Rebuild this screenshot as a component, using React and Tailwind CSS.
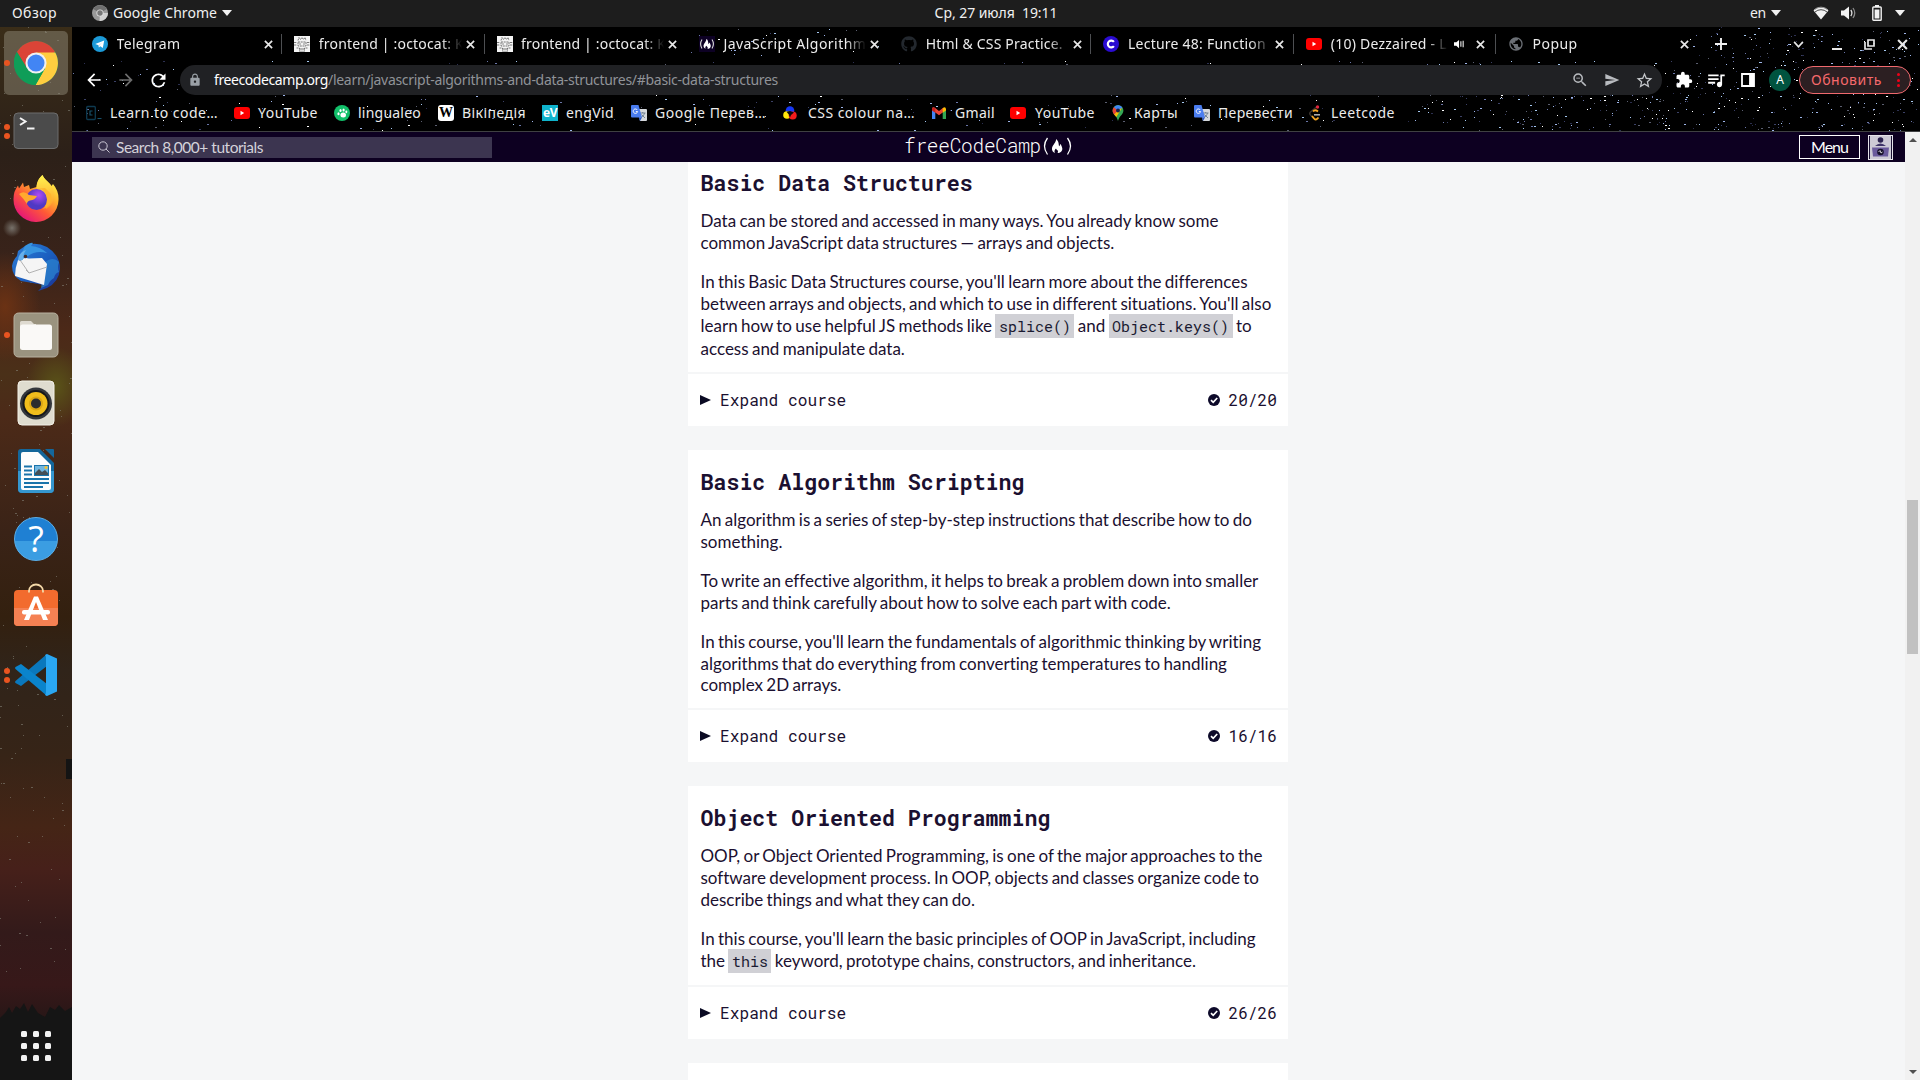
import React, { useLayoutEffect, useRef, useState } from "react";
import {
  MdArrowBack,
  MdArrowForward,
  MdRefresh,
  MdLock,
  MdZoomOut,
  MdSend,
  MdStarBorder,
  MdExtension,
  MdQueueMusic,
  MdPublic,
} from "react-icons/md";
import { FaGithub } from "react-icons/fa";

/* Text whose letter spacing is adjusted so that it takes exactly w pixels. */
function Fit({ w, className = "", children }) {
  const ref = useRef(null);
  const [ls, setLs] = useState(null);
  useLayoutEffect(() => {
    const el = ref.current;
    el.style.letterSpacing = "0px";
    const natural = el.getBoundingClientRect().width;
    setLs((w - natural) / String(children).length);
  }, [w, children]);
  return (
    <span
      ref={ref}
      className={`inline-block whitespace-pre ${className}`}
      style={ls === null ? undefined : { letterSpacing: ls + "px" }}
    >
      {children}
    </span>
  );
}

function makeStars(count, width, height, seed) {
  let s = seed;
  const rnd = () => {
    s = (s * 1664525 + 1013904223) % 4294967296;
    return s / 4294967296;
  };
  const colors = ["#ffffff", "#9db4e8", "#6a76a8", "#3b4166", "#5b5f70", "#2c3050", "#a5c8f0"];
  return Array.from({ length: count }, () => ({
    x: Math.floor(rnd() * width),
    y: Math.floor(rnd() * height),
    w: rnd() > 0.7 ? 2 : 1,
    c: colors[Math.floor(rnd() * colors.length)],
  }));
}
const SKY = [
  ...makeStars(520, 1848, 70, 7).map((s) => ({ ...s, y: s.y + 34 })),
  ...makeStars(640, 500, 104, 31).map((s) => ({ ...s, x: s.x + 1348 })),
  ...makeStars(30, 190, 34, 53).map((s) => ({ ...s, x: s.x + 618 })),
].filter((s) => s.y > 33 || s.x > 1610 || (s.x > 617 && s.x < 815));
const DOCK_STARS = makeStars(170, 72, 960, 99);

/* ---------- small icons ---------- */
const Telegram = () => (
  <svg viewBox="0 0 16 16" className="size-4">
    <circle cx="8" cy="8" r="8" fill="#1c9ad8" />
    <path d="M3.2 7.9 12.2 4.4 10.8 12 8.3 10.2 6.9 11.5 6.6 9.2Z" fill="#fff" />
    <path d="M6.6 9.2 10.6 6 7.4 9.6 6.9 11.5Z" fill="#b7d9ee" />
  </svg>
);
const Octocat = () => (
  <svg viewBox="0 0 16 16" className="size-4">
    <rect width="16" height="16" fill="#f4f4f4" />
    <path
      d="M4 4.500 5 1.500 6.500 3.500 8 1.500 9.500 3.500 11 1.500 12 4.500M0 6.500H3M0 9H3M13 6.500H16M13 9H16M4 6H12V10H4ZM2.500 12H5.500V15.500M13.500 12H10.500V15.500M7 12V16M9 12V16"
      stroke="#555"
      strokeWidth=".8"
      strokeDasharray="2 .7"
      fill="none"
    />
    <path d="M6 7.5V8.5M10 7.5V8.5" stroke="#222" />
  </svg>
);
const FLAME =
  "M4.500 0C5 3 1 6 .5 9 .2 11.500 1.500 13.500 3.500 14 2.500 12.500 3 10.800 4.500 9.500 5 11 6.500 11 6.500 12.500 6.500 13.400 6 14 6 14 9 14 11 12 10.800 9.500 10.600 7.500 9.500 6.500 9.300 5 8.300 5.600 8.300 6.800 7.800 7.300 7 7 7.800 2 4.500 0Z";
const FccFav = () => (
  <svg viewBox="0 0 16 16" className="size-4">
    <rect width="16" height="16" fill="#0d0124" />
    <path d="M3 3.500Q.2 8 3 12.500M13 3.500Q15.800 8 13 12.500" stroke="#ddd" fill="none" strokeWidth="1.100" />
    <path d={FLAME} fill="#fff" transform="translate(4.200 3) scale(.7)" />
  </svg>
);
const Scrimba = () => (
  <svg viewBox="0 0 16 16" className="size-4">
    <circle cx="8" cy="8" r="8" fill="#2a0bd1" />
    <path d="M10.900 5.900A3.400 3.400 0 1 0 10.900 10.100" stroke="#fff" strokeWidth="2.200" fill="none" />
  </svg>
);
const YouTube = () => (
  <svg viewBox="0 0 16 16" className="size-4">
    <rect y="2" width="16" height="12" rx="3" fill="#f00" />
    <path d="M6.500 5.800V10.200L10.200 8Z" fill="#fff" />
  </svg>
);
const LearnCode = () => (
  <svg viewBox="0 0 16 16" className="size-4">
    <rect x=".7" y="1.500" width="8.600" height="13" rx="1" fill="none" stroke="#0e3a50" strokeWidth="1.300" />
    <path d="M6.500 6H4V10H6.500M11.500 13.500H15.500" stroke="#17506b" strokeWidth="1.200" fill="none" />
  </svg>
);
const Lingua = () => (
  <svg viewBox="0 0 16 16" className="size-4">
    <circle cx="8" cy="8" r="8" fill="#12c06a" />
    <g fill="#fff">
      <ellipse cx="9.200" cy="10" rx="2.800" ry="2.500" />
      <ellipse cx="4.500" cy="8.800" rx="1.100" ry="1.500" />
      <ellipse cx="6.500" cy="5.500" rx="1.100" ry="1.500" />
      <ellipse cx="9.600" cy="5" rx="1.100" ry="1.500" />
      <ellipse cx="12.300" cy="6.800" rx="1" ry="1.400" />
    </g>
  </svg>
);
const Wiki = () => (
  <span className="flex size-4 items-center justify-center rounded-[3px] bg-white font-['Liberation_Serif',serif] text-[14px] leading-4 font-bold text-black">
    W
  </span>
);
const EngVid = () => (
  <span className="flex size-4 items-center justify-center bg-[#0fb3cc] font-['Noto_Sans',sans-serif] text-[12px] leading-4 font-bold tracking-[-0.5px] text-white">
    eV
  </span>
);
const Translate = () => (
  <svg viewBox="0 0 16 16" className="size-4">
    <path d="M6 4H15a1 1 0 0 1 1 1V15a1 1 0 0 1-1 1H9Z" fill="#d5d8dc" />
    <path d="M9 8H14.500M11.700 7V8M13.500 8C13 10.500 11 12 10 12.500M10.500 9.500 14 13" stroke="#6a7c8c" strokeWidth=".9" fill="none" />
    <path d="M1 0H7.500L11 12.500H1a1 1 0 0 1-1-1V1A1 1 0 0 1 1 0Z" fill="#4a7df0" />
    <path d="M6.300 5A2.200 2.200 0 1 0 6.600 6.600H4.800" stroke="#fff" fill="none" />
    <path d="M7.700 12.500H11L9 16Z" fill="#2a55c4" />
  </svg>
);
const CssColour = () => (
  <svg viewBox="0 0 16 16" className="size-4">
    <circle cx="8" cy="5.500" r="4.300" fill="#1537f5" />
    <circle cx="5" cy="10" r="3.800" fill="#ffe60a" />
    <circle cx="10.700" cy="10.500" r="4" fill="#f21b1b" />
    <path d="M4.500 6.800 8 6 12 7.500 9 10 8 12.500 6.800 9.500Z" fill="#0a0a0a" />
  </svg>
);
const Gmail = () => (
  <svg viewBox="0 0 16 16" className="size-4">
    <path d="M1 4V14H4.300V6.800Z" fill="#4285f4" />
    <path d="M15 4V14H11.700V6.800Z" fill="#34a853" />
    <path d="M1 3.500Q1.500 1.500 3.500 2.500L8 6 12.500 2.500 11.700 7.500 8 10.300 1 5Z" fill="#ea4335" />
    <path d="M11.700 3.200Q14.500 1 15 4V5.500L11.700 7.800Z" fill="#fbbc04" />
    <path d="M1 3.500Q2 1.500 4.300 3.200V7.800L1 5.500Z" fill="#c5221f" />
  </svg>
);
const Maps = () => (
  <svg viewBox="0 0 16 16" className="size-4">
    <path d="M2.600 5.500A5.400 5.400 0 0 1 13.400 5.500C13.400 9.500 9.500 10.500 8 16 6.800 10.500 2.600 9.500 2.600 5.500Z" fill="#34a853" />
    <path d="M2.600 5.500A5.400 5.400 0 0 1 4 1.900L8 5.500 4.500 10C3.500 8.800 2.600 7.500 2.600 5.500Z" fill="#ea4335" />
    <path d="M4 1.900A5.400 5.400 0 0 1 12.500 2.600L8 6Z" fill="#4285f4" />
    <path d="M4.200 9.500 8.500 5 12 3 6.300 12Z" fill="#fbbc04" />
    <circle cx="8" cy="5.400" r="2" fill="#14204a" />
  </svg>
);
const Leet = () => (
  <svg viewBox="0 0 16 16" className="size-4">
    <path d="M9 1.500 2.500 7Q1 8.500 2.500 10L6 13.800" stroke="#3a342e" strokeWidth="1.500" fill="none" />
    <path d="M5 6.500Q7 4 10 6.500M4 11 6.500 14Q8 15.500 10.500 12.500" stroke="#f5a623" strokeWidth="1.800" fill="none" />
    <path d="M6 9.800H12" stroke="#b5b5b5" strokeWidth="1.500" />
    <circle cx="9.500" cy="2" r="1.700" fill="#e0263c" />
  </svg>
);
const Cross = ({ className = "size-[9px]" }) => (
  <svg viewBox="0 0 10 10" className={className}>
    <path d="M1 1 9 9M9 1 1 9" stroke="#e8e8e8" strokeWidth="1.900" fill="none" />
  </svg>
);
const Caret = () => <span className="h-0 w-0 border-x-[5px] border-t-[6px] border-x-transparent border-t-[#f2f2f2]" />;

/* ---------- GNOME top bar ---------- */
function TopBar() {
  return (
    <div className="grid h-[27px] grid-cols-[1fr_auto_1fr] items-center bg-[#1d1d1d] pb-px font-['Noto_Sans',sans-serif] text-[14px] leading-[26px] text-[#f0f0f0]">
      <div className="flex items-center">
        <Fit w={45} className="ml-3">Обзор</Fit>
        <svg viewBox="0 0 16 16" className="ml-[35px] size-4">
          <circle cx="8" cy="8" r="8" fill="#9a9a9a" />
          <path d="M8 8 1.200 4A8 8 0 0 1 14.800 4Z" fill="#6f6f6f" />
          <path d="M8 8H16A8 8 0 0 1 7.500 16Z" fill="#d0d0d0" />
          <circle cx="8" cy="8" r="3.600" fill="#ddd" />
          <circle cx="8" cy="8" r="2.700" fill="#777" />
        </svg>
        <Fit w={104} className="ml-[5px]">Google Chrome</Fit>
        <span className="ml-[5px] flex"><Caret /></span>
      </div>
      <div className="flex w-[195px] pl-[72px]">
        <Fit w={123}>Ср, 27 июля  19:11</Fit>
      </div>
      <div className="flex items-center justify-end pr-[15px]">
        <Fit w={16}>en</Fit>
        <span className="ml-[5px] flex"><Caret /></span>
        <svg viewBox="0 0 16 14" className="ml-8 h-[14px] w-4">
          <path d="M.5 4.500A11 11 0 0 1 15.500 4.500L8 13.500Z" fill="#f2f2f2" />
          <path d="M1 3.800A10.500 10.500 0 0 1 15 3.800" stroke="#9a9a9a" fill="none" />
          <path d="M2 6A9 9 0 0 1 14 6" stroke="#1d1d1d" strokeWidth=".8" fill="none" />
        </svg>
        <svg viewBox="0 0 16 14" className="ml-[12px] h-[14px] w-4">
          <path d="M0 4.500H3L8 .5V13.500L3 9.500H0Z" fill="#f2f2f2" />
          <path d="M9.800 4Q12 7 9.800 10" stroke="#e0e0e0" strokeWidth="1.300" fill="none" />
          <path d="M12 2Q15.500 7 12 12" stroke="#8a8a8a" strokeWidth="1.300" fill="none" />
        </svg>
        <svg viewBox="0 0 10 16" className="ml-[15px] h-4 w-[10px]">
          <path d="M3 0H7V2H3Z" fill="#f2f2f2" />
          <rect x=".8" y="2" width="8.400" height="13.200" rx=".8" fill="none" stroke="#f2f2f2" strokeWidth="1.400" />
          <rect x="2.600" y="4.500" width="4.800" height="9" fill="#f2f2f2" />
        </svg>
        <span className="ml-[13px] flex"><Caret /></span>
      </div>
    </div>
  );
}

/* ---------- dock ---------- */
const Dots = ({ n }) => (
  <span className="absolute left-1 flex flex-col gap-[3px]">
    {Array.from({ length: n }, (_, i) => (
      <span key={i} className="size-[6px] rounded-full bg-[#e95420]" />
    ))}
  </span>
);

function DockItem({ dots = 0, active, children }) {
  return (
    <div className="relative flex h-[68px] w-[72px] items-center justify-center">
      {active && <span className="absolute inset-x-[4px] inset-y-[2px] rounded-[5px] bg-[#8d8775]/50" />}
      {dots > 0 && <Dots n={dots} />}
      <span className="relative flex">{children}</span>
    </div>
  );
}

const ChromeIcon = () => (
  <svg viewBox="0 0 48 48" className="size-[46px]">
    <circle cx="24" cy="24" r="23" fill="#13a05a" />
    <path d="M24 24 4.100 12.500A23 23 0 0 1 43.900 12.500Z" fill="#db4437" />
    <path d="M24 13H44.100A23 23 0 0 1 23.500 47L33.500 29.500Z" fill="#ffcd40" />
    <path d="M4.100 12.500 14.500 29.500 24 24 24 13Z" fill="#db4437" />
    <path d="M4.100 12.500 14.500 29.500Q19 35 24 35L33.500 29.500 23.500 47A23 23 0 0 1 4.100 12.500Z" fill="#0f9d58" />
    <circle cx="24" cy="24" r="11" fill="#f1f1f1" />
    <circle cx="24" cy="24" r="8.900" fill="#4285f4" />
  </svg>
);
const TerminalIcon = () => (
  <svg viewBox="0 0 46 38" className="h-[38px] w-[46px]">
    <rect x="1" y="1" width="44" height="35.500" rx="4" fill="#4b4b4b" stroke="#6d6d6d" />
    <path d="M7 6 12.500 9.500 7 13M14 16.500H21.500" stroke="#f4f4f4" strokeWidth="2" fill="none" />
  </svg>
);
const FirefoxIcon = () => (
  <svg viewBox="0 0 48 48" className="mb-[3px] size-12">
    <defs>
      <linearGradient id="ff1" x1=".85" y1=".1" x2=".2" y2=".95">
        <stop offset="0" stopColor="#fff04a" />
        <stop offset=".3" stopColor="#ffb02e" />
        <stop offset=".6" stopColor="#ff5a36" />
        <stop offset="1" stopColor="#e4127c" />
      </linearGradient>
      <radialGradient id="ff2" cx=".6" cy=".3">
        <stop offset="0" stopColor="#b04cf5" />
        <stop offset="1" stopColor="#4f39c4" />
      </radialGradient>
      <linearGradient id="ff3" x1="0" y1="0" x2="0" y2="1">
        <stop offset="0" stopColor="#fff44f" />
        <stop offset="1" stopColor="#ff9a2a" />
      </linearGradient>
    </defs>
    <path d="M24.500 13C25 8 27 4 30.500 1 32 5.500 37.500 8 39.500 12L41 10Q47 17 46.500 26A22.500 22.500 0 0 1 1.500 25Q1.500 17 6 11.500L7 14.500 11 8.500 12 13 17 11 18 15Z" fill="url(#ff1)" />
    <path d="M24.500 14C24.500 8 27 4 30.500 1 32 6 39 9 41 16 43.500 24 41 31 34 35L30 20Z" fill="url(#ff3)" />
    <circle cx="24.500" cy="25.500" r="10.500" fill="url(#ff2)" />
    <path d="M22 15Q30 13 34 20 38 29 31 35 42 30 39 20L33 14Z" fill="#ffb52e" opacity=".9" />
    <path d="M7 20Q12 16 17 21L25 22Q23 26 18 26.500 15 27 15 30 11 24 7 20Z" fill="#ffa92e" />
  </svg>
);
const ThunderbirdIcon = () => (
  <svg viewBox="0 0 50 50" className="size-[50px]">
    <defs>
      <linearGradient id="tb" x1="0" y1="0" x2="1" y2="1">
        <stop offset="0" stopColor="#2f7fd6" />
        <stop offset=".5" stopColor="#1b5fc0" />
        <stop offset="1" stopColor="#1a2f8f" />
      </linearGradient>
    </defs>
    <path d="M14 4Q24-1 36 5 49 13 49 27 48 40 36 46L27 49 33 43 10 39Q1 34 1 24 2 18 6 14L7 9Z" fill="url(#tb)" />
    <path d="M14 4Q20 0 22 1L20 4Q30 5 36 11 25 8 17 14L10 22Q9 12 14 4Z" fill="#3794e0" />
    <path d="M34 20Q42 14 48 20 46 25 48 30 44 31 43 36 39 38 37 43L30 46Z" fill="#2b83cf" opacity=".75" />
    <path d="M7 18 10 19Q12 15 18 16.500L31 16 36 22 33 43 4 34Q4 26 7 18Z" fill="#f5f5f5" />
    <path d="M9 18 18 31 36 25M18 31 15 28" stroke="#a9a9a9" strokeWidth=".9" fill="none" />
    <circle cx="14.500" cy="14.500" r="1.800" fill="#432a27" />
    <path d="M7 18Q8 10 15 8 12 12 12 18Z" fill="#68b0ea" />
  </svg>
);
const FilesIcon = () => (
  <svg viewBox="0 0 46 46" className="size-[46px]">
    <rect x="1" y="1" width="44" height="44" rx="4.500" fill="#9a937f" stroke="#b8b1a0" />
    <path d="M7 12V10.500Q7 9 8.500 9H18L21 12H23V18H7Z" fill="#dedad0" />
    <rect x="7" y="12.500" width="32" height="25.500" rx="2.500" fill="#faf9f7" />
  </svg>
);
const RhythmboxIcon = () => (
  <svg viewBox="0 0 38 46" className="h-[46px] w-[38px]">
    <rect x="1" y="1" width="36" height="44" rx="4" fill="#dfdccf" stroke="#f3f1e8" />
    <circle cx="19" cy="23.500" r="16" fill="#34373c" />
    <circle cx="19" cy="23.500" r="13.500" fill="#16181a" />
    <circle cx="19" cy="23.500" r="11.500" fill="#f0bd1c" />
    <circle cx="19" cy="23.500" r="7" fill="#d9a514" />
    <circle cx="19" cy="23.500" r="5" fill="#2a2b2e" />
  </svg>
);
const WriterIcon = () => (
  <svg viewBox="0 0 38 46" className="h-[46px] w-[38px]">
    <path d="M4 1H23L37 15V41a4 4 0 0 1-4 4H5a4 4 0 0 1-4-4V4A3 3 0 0 1 4 1Z" fill="#14679b" />
    <path d="M1 23H37V41a4 4 0 0 1-4 4H5a4 4 0 0 1-4-4Z" fill="#3597cf" />
    <path d="M28 1H36Q37 1 37 2V10Z" fill="#14679b" />
    <path d="M6 4H21L34 17V40Q34 42 32 42H6Q4 42 4 40V6Q4 4 6 4Z" fill="#fdfdfd" />
    <path d="M7 18.500H15M7 22.500H15M7 26.500H15M7 31H32M7 35H32M7 39H26" stroke="#1a74ab" strokeWidth="2" />
    <rect x="17.500" y="17.500" width="14" height="10" fill="#72b7e0" stroke="#1a74ab" />
    <path d="M18 27V25L22 21 25 24 28 22 31 25V27Z" fill="#454f56" />
    <circle cx="29" cy="19.500" r="1.500" fill="#f5c12e" />
  </svg>
);
const HelpIcon = () => (
  <span className="flex size-[44px] items-center justify-center rounded-full border border-[#5aaee8] bg-linear-to-b from-[#1f80d3] from-55% to-[#3b9de2] to-55% font-['Open_Sans',sans-serif] text-[36px] leading-none text-white">
    ?
  </span>
);
const StoreIcon = () => (
  <svg viewBox="0 0 46 46" className="mb-[4px] size-[46px]">
    <rect x="1" y="8" width="44" height="36" rx="4" fill="#f26b2e" />
    <path d="M1 26H45V40a4 4 0 0 1-4 4H5a4 4 0 0 1-4-4Z" fill="#f58153" />
    <path d="M16 10.500V9A7 6.500 0 0 1 30 9V10.500" stroke="#f4d9a8" strokeWidth="1.800" fill="none" />
    <path d="M11 38 21 14.500H25L35 38H30L23 20 16 38Z" fill="#fff" />
    <rect x="9" y="28" width="28" height="4.500" rx="2" fill="#fff" />
  </svg>
);
const VsCodeIcon = () => (
  <svg viewBox="0 0 44 44" className="size-[44px]">
    <path d="M33 1V13L7 33 1.500 30Q.5 29 1.500 28Z" fill="#0a78bd" />
    <path d="M1.500 14 7 11 33 31V43L1.500 16Q.5 15 1.500 14Z" fill="#0a84cc" />
    <path d="M33 1 43 5.500V38.500L33 43 31 42Q32 41 32 39V5Q32 3 31 2Z" fill="#2aa7f2" />
  </svg>
);

function Dock() {
  return (
    <div className="relative flex h-[1053px] w-[72px] shrink-0 flex-col overflow-hidden bg-[#2c2018]">
      <div className="absolute inset-0 bg-[linear-gradient(to_bottom,#3a2d18_0%,#2c2018_12%,#39231a_22%,#4c2918_29%,#4a3018_33%,#4c2a18_37%,#3a2317_48%,#33200f_56%,#30241a_61%,#362417_69%,#452516_76%,#46201a_80%,#331a1a_86%,#371819_91%,#241616_95%,#151515_97.5%)]" />
      <div className="absolute top-[320px] left-[26px] h-[80px] w-[60px] bg-[radial-gradient(closest-side,#5a5318,transparent)]" />
      <div className="absolute top-[225px] left-[-30px] h-[110px] w-[70px] bg-[radial-gradient(closest-side,#6b3214,transparent)]" />
      <div className="absolute top-[192px] left-[3px] size-[18px] bg-[radial-gradient(closest-side,#77716a,transparent)]" />
      <svg viewBox="0 0 72 1053" className="absolute inset-0 h-[1053px] w-[72px]">
        {DOCK_STARS.map((s, i) => (
          <rect key={i} x={s.x} y={s.y} width={s.w} height={1} fill="#8a8a80" opacity=".55" />
        ))}
        <path d="M0 991 6 985 9 980 12 986 16 979 20 982 24 976 28 985 32 977 38 986 45 990 50 980 55 983 59 978 65 984 72 980V1053H0Z" fill="#151515" />
      </svg>
      <div className="absolute top-[732px] left-[66px] h-[20px] w-[6px] bg-[#141414]" />
      <div className="relative flex flex-col pt-[2px]">
        <DockItem dots={1} active><ChromeIcon /></DockItem>
        <DockItem dots={2}><TerminalIcon /></DockItem>
        <DockItem><FirefoxIcon /></DockItem>
        <DockItem><ThunderbirdIcon /></DockItem>
        <DockItem dots={1}><FilesIcon /></DockItem>
        <DockItem><RhythmboxIcon /></DockItem>
        <DockItem><WriterIcon /></DockItem>
        <DockItem><HelpIcon /></DockItem>
        <DockItem><StoreIcon /></DockItem>
        <DockItem dots={2}><VsCodeIcon /></DockItem>
      </div>
      <div className="relative mt-auto mb-[19px] grid grid-cols-[repeat(3,6px)] justify-center gap-[6px]">
        {Array.from({ length: 9 }, (_, i) => (
          <span key={i} className="size-[6px] rounded-[1.500px] bg-[#f2f2f2]" />
        ))}
      </div>
    </div>
  );
}

/* ---------- browser chrome ---------- */
const TABS = [
  { icon: <Telegram />, label: "Telegram", w: 64, sep: true },
  { icon: <Octocat />, label: "frontend | :octocat: K", w: 145, sep: true },
  { icon: <Octocat />, label: "frontend | :octocat: K", w: 145 },
  { icon: <FccFav />, label: "JavaScript Algorithm", w: 143 },
  { icon: <FaGithub className="size-4 text-[#23282e]" />, label: "Html & CSS Practice.", w: 137, sep: true },
  { icon: <Scrimba />, label: "Lecture 48: Function", w: 138, sep: true },
  { icon: <YouTube />, label: "(10) Dezzaired - L", w: 116, sep: true, sound: true },
  { icon: <MdPublic className="size-4 text-[#6b6f75]" />, label: "Popup", w: 45 },
];

function TabStrip() {
  return (
    <div className="flex h-[38px] items-center pb-1 pl-[8px]">
      {TABS.map((t, i) => (
        <div key={i} className="flex h-[34px] w-[202.300px] shrink-0 items-center pl-[12px]">
          <span className="flex shrink-0">{t.icon}</span>
          <div
            className={
              t.sound
                ? "ml-[9px] w-[117px] overflow-hidden [mask-image:linear-gradient(to_right,#000_82%,transparent)]"
                : "ml-[8.500px] w-[146px] overflow-hidden [mask-image:linear-gradient(to_right,#000_84%,transparent_98%)]"
            }
          >
            <Fit w={t.w}>{t.label}</Fit>
          </div>
          {t.sound && (
            <svg viewBox="0 0 12 10" className="ml-[6px] h-[10px] w-[11px]">
              <path d="M0 3H2.500L5.500 .5V9.500L2.500 7H0Z" fill="#fff" />
              <path d="M7.500 2V8M10 1.500V8.500" stroke="#ddd" strokeWidth="1.300" />
            </svg>
          )}
          <span className={t.sound ? "ml-[11px] flex" : "ml-[1px] flex"}><Cross /></span>
          {t.sep && <span className="ml-auto h-[20px] w-px bg-[#4d4f52]" />}
        </div>
      ))}
      <svg viewBox="0 0 12 12" className="ml-[17px] size-3 shrink-0">
        <path d="M6 0V12M0 6H12" stroke="#f1f1f1" strokeWidth="1.900" />
      </svg>
      <svg viewBox="0 0 12 8" className="ml-[66px] h-[7px] w-[11px] shrink-0">
        <path d="M1 1 6 6.500 11 1" stroke="#e8e8e8" strokeWidth="1.900" fill="none" />
      </svg>
      <span className="mt-[9px] ml-7 h-[2px] w-[10px] bg-[#e8e8e8]" />
      <svg viewBox="0 0 11 11" className="ml-[22px] size-[11px] shrink-0">
        <path d="M4 1H10V7H4ZM1 3V10H8" stroke="#e8e8e8" strokeWidth="1.700" fill="none" />
      </svg>
      <span className="ml-[22px] flex"><Cross className="size-[11px]" /></span>
    </div>
  );
}

function Toolbar() {
  return (
    <div className="flex h-[30px] items-center text-white">
      <MdArrowBack className="ml-[12px] size-5" />
      <MdArrowForward className="ml-[12px] size-5 text-[#6d6d6d]" />
      <MdRefresh className="ml-[12px] size-[21px]" />
      <div className="ml-[11px] flex h-[30px] w-[1482px] items-center rounded-full bg-[#202124] text-[#909398]">
        <MdLock className="ml-[8px] size-[14px] text-[#9aa0a6]" />
        <Fit w={114} className="ml-[12px] text-white">freecodecamp.org</Fit>
        <Fit w={450}>/learn/javascript-algorithms-and-data-structures/#basic-data-structures</Fit>
        <MdZoomOut className="ml-auto size-[18px] text-[#b8bbbf]" />
        <MdSend className="ml-[15px] size-[16px] text-[#b8bbbf]" />
        <MdStarBorder className="mr-[8px] ml-[15px] size-[19px] text-[#c4c7ca]" />
      </div>
      <MdExtension className="ml-[13px] size-[18px]" />
      <MdQueueMusic className="ml-[12px] size-[22px] scale-x-[.95]" />
      <svg viewBox="0 0 14 14" className="ml-[14px] size-[14px]">
        <path d="M1 1H13V13H1ZM9 1H13V13H9Z" stroke="#fff" strokeWidth="1.800" fill="none" />
        <path d="M9 1H13V13H9Z" fill="#fff" />
      </svg>
      <span className="ml-[14px] flex size-[22px] items-center justify-center rounded-full bg-[#00533f] text-[12px]">A</span>
      <div className="ml-[8px] flex h-[28px] w-[112px] items-center rounded-full border border-[#f0696e] bg-[#2c1f22] text-[#f5696c]">
        <Fit w={71} className="ml-[11px]">Обновить</Fit>
        <span className="ml-[15px] flex flex-col gap-[2.500px]">
          <span className="size-[3px] rounded-full bg-[#f00018]" />
          <span className="size-[3px] rounded-full bg-[#f00018]" />
          <span className="size-[3px] rounded-full bg-[#f00018]" />
        </span>
      </div>
    </div>
  );
}

const MARKS = [
  { icon: <LearnCode />, label: "Learn to code…", w: 108, box: "w-[148px] gap-2" },
  { icon: <YouTube />, label: "YouTube", w: 60, box: "w-[100px] gap-2" },
  { icon: <Lingua />, label: "lingualeo", w: 63, box: "w-[104px] gap-2" },
  { icon: <Wiki />, label: "Вікіпедія", w: 64, box: "w-[104px] gap-2" },
  { icon: <EngVid />, label: "engVid", w: 48, box: "w-[89px] gap-2" },
  { icon: <Translate />, label: "Google Перев…", w: 111, box: "w-[151px] gap-2" },
  { icon: <CssColour />, label: "CSS colour na…", w: 107, box: "w-[149px] gap-[10px]" },
  { icon: <Gmail />, label: "Gmail", w: 40, box: "w-[79px] gap-2" },
  { icon: <YouTube />, label: "YouTube", w: 60, box: "w-[100px] gap-[9px]" },
  { icon: <Maps />, label: "Карты", w: 44, box: "w-[84px] gap-2" },
  { icon: <Translate />, label: "Перевести", w: 75, box: "w-[114px] gap-2" },
  { icon: <Leet />, label: "Leetcode", w: 64, box: "w-[90px] gap-[7px]" },
];

function Bookmarks() {
  return (
    <div className="flex h-[36px] items-center pl-[14px]">
      {MARKS.map((m, i) => (
        <div key={i} className={`flex shrink-0 items-center ${m.box}`}>
          {m.icon}
          <Fit w={m.w}>{m.label}</Fit>
        </div>
      ))}
    </div>
  );
}

function BrowserChrome() {
  return (
    <div className="relative h-[105px] shrink-0 border-b border-[#3f4042] bg-black font-['Noto_Sans',sans-serif] text-[14px] leading-[20px] text-[#ececec]">
      <svg viewBox="0 0 1848 104" className="absolute inset-0 h-[104px] w-[1848px]">
        {SKY.map((s, i) => (
          <rect key={i} x={s.x} y={s.y} width={s.w} height={1} fill={s.c} />
        ))}
      </svg>
      <div className="relative">
        <TabStrip />
        <Toolbar />
        <Bookmarks />
      </div>
    </div>
  );
}

/* ---------- page ---------- */
function SiteHeader() {
  return (
    <div className="flex h-[30px] shrink-0 items-center bg-[#0d0021] text-white">
      <div className="ml-5 flex h-[21px] w-[400px] items-center bg-[#3c3550] text-[#d4d2da]">
        <svg viewBox="0 0 12 12" className="ml-[6px] size-3">
          <circle cx="5" cy="5" r="4.200" stroke="#c9c6d2" fill="none" />
          <path d="M8 8 11.500 11.500" stroke="#c9c6d2" />
        </svg>
        <Fit w={147} className="ml-[6px] text-[15.500px] leading-5">Search 8,000+ tutorials</Fit>
      </div>
      <div className="mb-[2px] ml-[412px] flex items-center font-['Roboto_Mono','Liberation_Mono',monospace] text-[19.500px] leading-[26px] font-light">
        <Fit w={137}>freeCodeCamp</Fit>
        <svg viewBox="0 0 32 20" className="h-5 w-8">
          <path d="M6.500 2Q.5 10 6.500 18.500M26.500 2Q32.500 10 26.500 18.500" stroke="#fff" strokeWidth="1.300" fill="none" />
          <path d={FLAME} fill="#fff" transform="translate(10.500 3)" />
        </svg>
      </div>
      <div className="ml-auto flex items-center">
        <div className="flex h-6 w-[61px] items-center justify-center border border-white text-[16px]">
          <Fit w={37}>Menu</Fit>
        </div>
        <svg viewBox="0 0 25 25" className="mr-3 ml-2 size-[25px]">
          <rect x=".5" y=".5" width="24" height="24" fill="#cdcad6" stroke="#e6e4ea" />
          <path d="M1.500 1V24M23.500 1V24" stroke="#1a0f33" />
          <circle cx="12.500" cy="5" r="2.800" fill="#2c2350" />
          <path d="M7 11Q12.500 6 18 11Z" fill="#3f3469" />
          <path d="M4 12.500H21L20 21.500H5Z" fill="#6a5a9c" />
          <circle cx="12.500" cy="17" r="3.300" fill="#16102b" />
          <path d="M10.500 17 12 15.500 13 18 14.500 17" stroke="#fff" strokeWidth=".8" fill="none" />
        </svg>
      </div>
    </div>
  );
}

const Code = ({ children }) => (
  <code className="bg-[#d0d0d5] px-[3.500px] pt-[2px] pb-[2px] font-['Roboto_Mono','DejaVu_Sans_Mono',monospace] text-[15px] text-[#1b1b32]">
    {children}
  </code>
);

const P = ({ children, last }) => (
  <p
    className={`text-[17px] leading-[21.850px] whitespace-nowrap [font-variant-ligatures:none] [word-spacing:-1px] ${last ? "" : "mb-[17px]"}`}
  >
    {children}
  </p>
);

function Course({ title, count, height, children }) {
  return (
    <section className={`flex w-[600px] shrink-0 flex-col bg-white ${height}`}>
      <div className="flex grow flex-col px-[12.500px] pt-[18px]">
        <h3 className="mb-[13.400px] font-['Roboto_Mono','DejaVu_Sans_Mono',monospace] text-[21.600px] leading-[28px] font-bold">{title}</h3>
        {children}
      </div>
      <div className="flex h-[54px] shrink-0 items-center border-t-2 border-[#f5f6f7] pr-[11px] pl-[12px] font-['Roboto_Mono','DejaVu_Sans_Mono',monospace] text-[16.200px]">
        <svg viewBox="0 0 11 10" className="mb-px h-[10px] w-[11px]">
          <path d="M0 0 11 5 0 10Z" fill="#0a0a23" />
        </svg>
        <span className="ml-[9px]">Expand course</span>
        <svg viewBox="0 0 12 12" className="ml-auto size-3">
          <circle cx="6" cy="6" r="6" fill="#0d0a2a" />
          <path d="M3 6.200 5.200 8.300 9.200 4" stroke="#fff" strokeWidth="1.700" fill="none" />
        </svg>
        <span className="ml-[8px]">{count}</span>
      </div>
    </section>
  );
}

function Page() {
  return (
    <div className="flex h-[948px] overflow-hidden bg-[#f5f6f7] font-['Lato',sans-serif] text-[#1b1030]">
      <div className="flex w-[1833px] flex-col">
        <SiteHeader />
        <main className="flex grow flex-col items-center gap-6 overflow-hidden pr-px">
          <div className="flex h-[264px] shrink-0 flex-col justify-end overflow-hidden">
            <Course title="Basic Data Structures" count="20/20" height="h-[275px]">
              <P>
                Data can be stored and accessed in many ways. You already know some
                <br />
                common JavaScript data structures — arrays and objects.
              </P>
              <P last>
                In this Basic Data Structures course, you'll learn more about the differences
                <br />
                between arrays and objects, and which to use in different situations. You'll also
                <br />
                learn how to use helpful JS methods like <Code>splice()</Code> and <Code>Object.keys()</Code> to
                <br />
                access and manipulate data.
              </P>
            </Course>
          </div>
          <Course title="Basic Algorithm Scripting" count="16/16" height="h-[312px]">
            <P>
              An algorithm is a series of step-by-step instructions that describe how to do
              <br />
              something.
            </P>
            <P>
              To write an effective algorithm, it helps to break a problem down into smaller
              <br />
              parts and think carefully about how to solve each part with code.
            </P>
            <P last>
              In this course, you'll learn the fundamentals of algorithmic thinking by writing
              <br />
              algorithms that do everything from converting temperatures to handling
              <br />
              complex 2D arrays.
            </P>
          </Course>
          <Course title="Object Oriented Programming" count="26/26" height="h-[253px]">
            <P>
              OOP, or Object Oriented Programming, is one of the major approaches to the
              <br />
              software development process. In OOP, objects and classes organize code to
              <br />
              describe things and what they can do.
            </P>
            <P last>
              In this course, you'll learn the basic principles of OOP in JavaScript, including
              <br />
              the <Code>this</Code> keyword, prototype chains, constructors, and inheritance.
            </P>
          </Course>
          <section className="h-[60px] w-[600px] shrink-0 bg-white" />
        </main>
      </div>
      <div className="flex w-[15px] flex-col items-center bg-[#f1f1f1]">
        <span className="mt-[6px] h-0 w-0 border-x-[4px] border-b-[4px] border-x-transparent border-b-[#505050]" />
        <span className="mt-[358px] h-[154px] w-[11px] bg-[#c1c1c1]" />
        <span className="mt-auto mb-[6px] h-0 w-0 border-x-[4px] border-t-[4px] border-x-transparent border-t-[#505050]" />
      </div>
    </div>
  );
}

export default function App() {
  return (
    <div className="flex h-[1080px] w-[1920px] flex-col overflow-hidden bg-black">
      <TopBar />
      <div className="flex">
        <Dock />
        <div className="flex w-[1848px] flex-col">
          <BrowserChrome />
          <Page />
        </div>
      </div>
    </div>
  );
}
